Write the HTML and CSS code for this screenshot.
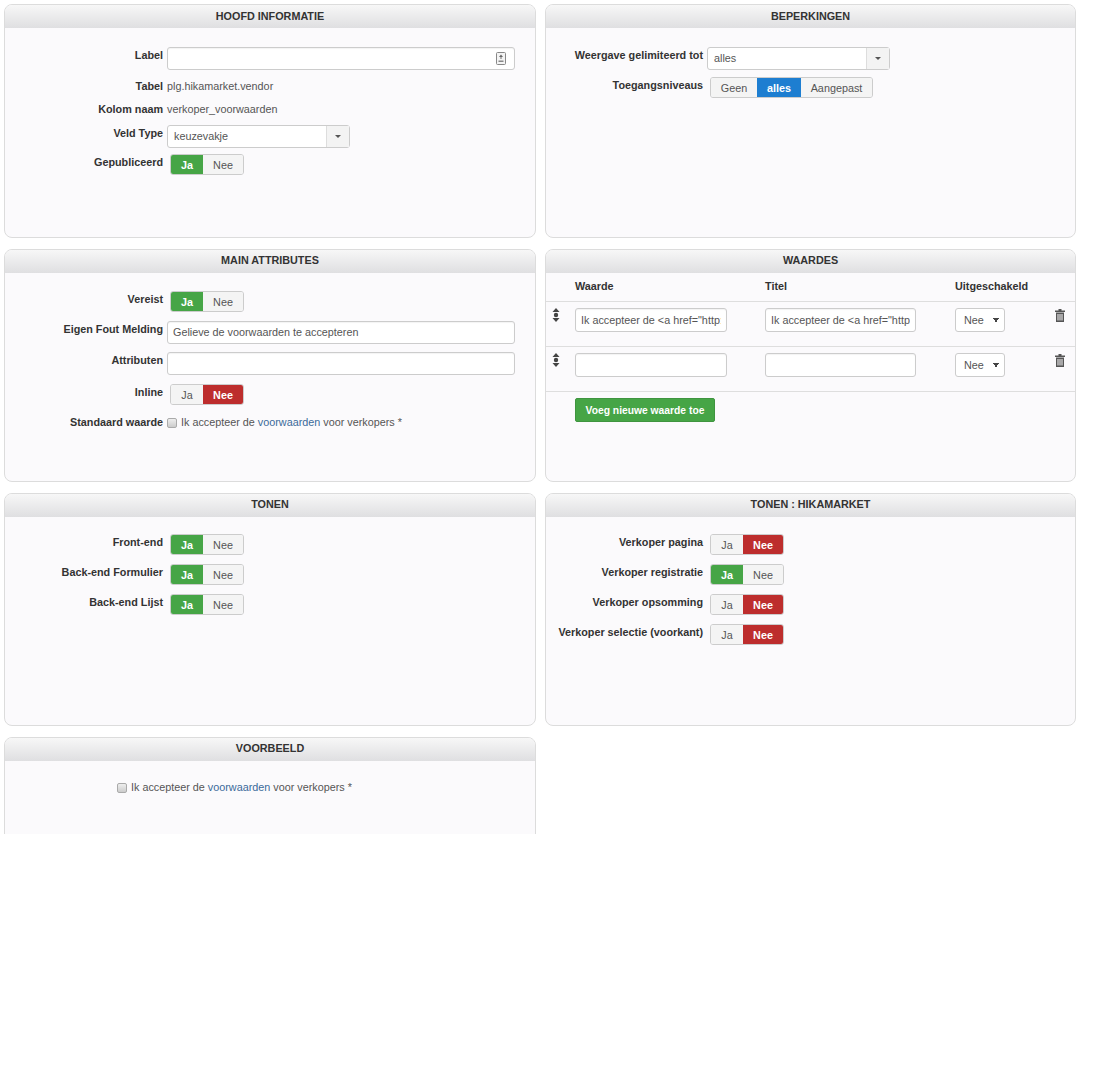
FILE: index.html
```html
<!DOCTYPE html>
<html lang="en">

<head>
    <meta charset="UTF-8">
    <title>Veld bewerken</title>
    <link rel="stylesheet" href="styles.css">
</head>

<body>
    <div class="page">
        <div class="panel">
            <div class="panel-title title-top">HOOFD INFORMATIE</div>
            <div class="panel-body">
                <div class="row">
                    <label class="row-label">Label</label>
                    <div class="field-wrap">
                        <input type="text" class="field">
                        <svg class="field-icon" width="10" height="13" viewBox="0 0 10 13">
                            <rect x="0.5" y="0.5" width="9" height="12" rx="1" fill="#f4f4f4" stroke="#888" />
                            <path d="M5 2.5 L7 5 H3 Z" fill="#666" />
                            <path d="M4.4 5 H5.6 V7 H4.4 Z M2.5 8.5 H7.5 V10 H2.5 Z" fill="#888" />
                        </svg>
                    </div>
                </div>
                <div class="row">
                    <label class="row-label">Tabel</label>
                    <div class="row-text">plg.hikamarket.vendor</div>
                </div>
                <div class="row row-before-select">
                    <label class="row-label">Kolom naam</label>
                    <div class="row-text">verkoper_voorwaarden</div>
                </div>
                <div class="row row-short">
                    <label class="row-label">Veld Type</label>
                    <div class="chosen">
                        <span class="chosen-value">keuzevakje</span>
                        <span class="chosen-arrow"><b class="caret"></b></span>
                    </div>
                </div>
                <div class="row">
                    <label class="row-label">Gepubliceerd</label>
                    <div class="switch">
                        <span class="switch-btn on-yes">Ja</span>
                        <span class="switch-btn">Nee</span>
                    </div>
                </div>
            </div>
        </div>

        <div class="panel panel-right">
            <div class="panel-title title-top">BEPERKINGEN</div>
            <div class="panel-body">
                <div class="row row-short">
                    <label class="row-label">Weergave gelimiteerd tot</label>
                    <div class="chosen">
                        <span class="chosen-value">alles</span>
                        <span class="chosen-arrow"><b class="caret"></b></span>
                    </div>
                </div>
                <div class="row">
                    <label class="row-label">Toegangsniveaus</label>
                    <div class="switch">
                        <span class="switch-btn btn-geen">Geen</span>
                        <span class="switch-btn on-blue">alles</span>
                        <span class="switch-btn btn-aangepast">Aangepast</span>
                    </div>
                </div>
            </div>
        </div>

        <div class="panel">
            <div class="panel-title">MAIN ATTRIBUTES</div>
            <div class="panel-body body-attr">
                <div class="row">
                    <label class="row-label">Vereist</label>
                    <div class="switch">
                        <span class="switch-btn on-yes">Ja</span>
                        <span class="switch-btn">Nee</span>
                    </div>
                </div>
                <div class="row">
                    <label class="row-label">Eigen Fout Melding</label>
                    <input type="text" class="field" value="Gelieve de voorwaarden te accepteren">
                </div>
                <div class="row row-before-select">
                    <label class="row-label">Attributen</label>
                    <input type="text" class="field">
                </div>
                <div class="row">
                    <label class="row-label">Inline</label>
                    <div class="switch">
                        <span class="switch-btn">Ja</span>
                        <span class="switch-btn on-no">Nee</span>
                    </div>
                </div>
                <div class="row">
                    <label class="row-label">Standaard waarde</label>
                    <div class="check-line">
                        <input type="checkbox" class="check">
                        <span>Ik accepteer de <a href="#">voorwaarden</a> voor verkopers *</span>
                    </div>
                </div>
            </div>
        </div>

        <div class="panel panel-right">
            <div class="panel-title">WAARDES</div>
            <div class="values-row values-head">
                <span></span>
                <span>Waarde</span>
                <span>Titel</span>
                <span>Uitgeschakeld</span>
                <span></span>
            </div>
            <div class="values-row">
                <svg class="drag-icon" width="8" height="14" viewBox="0 0 8 14">
                    <path d="M4 0 L7.5 4 H0.5 Z M4 14 L0.5 10 H7.5 Z" fill="#444" />
                    <circle cx="4" cy="7" r="2.2" fill="#444" />
                </svg>
                <input type="text" class="field" value='Ik accepteer de &lt;a href="http://example'>
                <input type="text" class="field" value='Ik accepteer de &lt;a href="http://example'>
                <select class="small-select">
                    <option>Nee</option>
                </select>
                <svg class="trash-icon" width="10" height="13" viewBox="0 0 10 13">
                    <path d="M3.5 0 H6.5 V1.5 H10 V3 H0 V1.5 H3.5 Z" fill="#555" />
                    <path d="M1 3.5 H9 V13 H1 Z M2.5 5 V11.5 H3.5 V5 Z M4.5 5 V11.5 H5.5 V5 Z M6.5 5 V11.5 H7.5 V5 Z" fill="#555" fill-rule="evenodd" />
                </svg>
            </div>
            <div class="values-row">
                <svg class="drag-icon" width="8" height="14" viewBox="0 0 8 14">
                    <path d="M4 0 L7.5 4 H0.5 Z M4 14 L0.5 10 H7.5 Z" fill="#444" />
                    <circle cx="4" cy="7" r="2.2" fill="#444" />
                </svg>
                <input type="text" class="field">
                <input type="text" class="field">
                <select class="small-select">
                    <option>Nee</option>
                </select>
                <svg class="trash-icon" width="10" height="13" viewBox="0 0 10 13">
                    <path d="M3.5 0 H6.5 V1.5 H10 V3 H0 V1.5 H3.5 Z" fill="#555" />
                    <path d="M1 3.5 H9 V13 H1 Z M2.5 5 V11.5 H3.5 V5 Z M4.5 5 V11.5 H5.5 V5 Z M6.5 5 V11.5 H7.5 V5 Z" fill="#555" fill-rule="evenodd" />
                </svg>
            </div>
            <button type="button" class="add-btn">Voeg nieuwe waarde toe</button>
        </div>

        <div class="panel">
            <div class="panel-title">TONEN</div>
            <div class="panel-body body-list">
                <div class="row">
                    <label class="row-label">Front-end</label>
                    <div class="switch">
                        <span class="switch-btn on-yes">Ja</span>
                        <span class="switch-btn">Nee</span>
                    </div>
                </div>
                <div class="row">
                    <label class="row-label">Back-end Formulier</label>
                    <div class="switch">
                        <span class="switch-btn on-yes">Ja</span>
                        <span class="switch-btn">Nee</span>
                    </div>
                </div>
                <div class="row">
                    <label class="row-label">Back-end Lijst</label>
                    <div class="switch">
                        <span class="switch-btn on-yes">Ja</span>
                        <span class="switch-btn">Nee</span>
                    </div>
                </div>
            </div>
        </div>

        <div class="panel panel-right">
            <div class="panel-title">TONEN : HIKAMARKET</div>
            <div class="panel-body body-list">
                <div class="row">
                    <label class="row-label">Verkoper pagina</label>
                    <div class="switch">
                        <span class="switch-btn">Ja</span>
                        <span class="switch-btn on-no">Nee</span>
                    </div>
                </div>
                <div class="row">
                    <label class="row-label">Verkoper registratie</label>
                    <div class="switch">
                        <span class="switch-btn on-yes">Ja</span>
                        <span class="switch-btn">Nee</span>
                    </div>
                </div>
                <div class="row">
                    <label class="row-label">Verkoper opsomming</label>
                    <div class="switch">
                        <span class="switch-btn">Ja</span>
                        <span class="switch-btn on-no">Nee</span>
                    </div>
                </div>
                <div class="row">
                    <label class="row-label">Verkoper selectie (voorkant)</label>
                    <div class="switch">
                        <span class="switch-btn">Ja</span>
                        <span class="switch-btn on-no">Nee</span>
                    </div>
                </div>
            </div>
        </div>

        <div class="panel">
            <div class="panel-title">VOORBEELD</div>
            <div class="preview">
                <input type="checkbox" class="check">
                <span>Ik accepteer de <a href="#">voorwaarden</a> voor verkopers *</span>
            </div>
        </div>
    </div>
</body>

</html>
```

FILE: styles.css
```css
body {
    margin: 0;
    background-color: #fff;
    font-family: "Liberation Sans", Arial, sans-serif;
    font-size: 10.8px;
    color: #555;
}

.page {
    display: grid;
    grid-template-columns: 532px 531px;
    grid-template-rows: 234px 233px 233px 233px;
    column-gap: 9px;
    row-gap: 11px;
    width: 1072px;
    height: 830px;
    margin: 4px 0 0 4px;
    overflow: hidden;
}

.panel {
    background-color: #fbfafc;
    border: 1px solid #dcdcdc;
    border-radius: 8px;
    box-sizing: border-box;
}

.panel-title {
    height: 23px;
    line-height: 21px;
    text-align: center;
    font-weight: bold;
    color: #333;
    border-radius: 7px 7px 0 0;
    background: linear-gradient(to bottom, #f7f7f7, #dfdfe1);
}

.title-top {
    line-height: 23px;
}

.panel-body {
    padding-top: 19px;
}

.body-attr {
    padding-top: 18px;
}

.body-list {
    padding-top: 17px;
}

.row {
    display: flex;
    gap: 4px;
    margin-bottom: 8px;
}

.row-short {
    margin-bottom: 6px;
}

.panel-right .row-short {
    margin-bottom: 7px;
}

.row-before-select {
    margin-bottom: 9px;
}

.row-label {
    flex: none;
    width: 158px;
    padding-top: 1px;
    line-height: 14px;
    text-align: right;
    font-weight: bold;
    color: #333;
}

.panel-right .row-label {
    width: 157px;
}

.row-text {
    padding-top: 1px;
    line-height: 14px;
}

.field {
    box-sizing: border-box;
    width: 348px;
    height: 23px;
    padding: 0 5px 1px;
    border: 1px solid #ccc;
    border-radius: 3px;
    background-color: #fff;
    box-shadow: inset 0 1px 1px rgba(0, 0, 0, 0.05);
    font-family: inherit;
    font-size: 10.8px;
    color: #555;
}

.field-wrap {
    position: relative;
}

.field-icon {
    position: absolute;
    top: 5px;
    right: 9px;
}

.chosen {
    display: flex;
    box-sizing: border-box;
    width: 183px;
    height: 23px;
    border: 1px solid #ccc;
    border-radius: 3px;
    background-color: #fff;
    line-height: 21px;
}

.chosen-value {
    flex: 1;
    padding-left: 6px;
}

.chosen-arrow {
    display: flex;
    align-items: center;
    justify-content: center;
    width: 22px;
    border-left: 1px solid #ddd;
    background-color: #f3f3f3;
}

.caret {
    border-top: 3px solid #555;
    border-left: 3px solid transparent;
    border-right: 3px solid transparent;
}

.switch {
    display: flex;
    height: 21px;
    margin: 0 0 1px 3px;
    border: 1px solid #ccc;
    border-radius: 3px;
    box-sizing: border-box;
    overflow: hidden;
}

.switch-btn {
    box-sizing: border-box;
    width: 32px;
    line-height: 20px;
    text-align: center;
    background-color: #f4f4f4;
}

.switch-btn + .switch-btn {
    width: 40px;
}

.switch .btn-geen {
    width: 46px;
}

.switch .on-blue {
    width: 44px;
}

.switch .btn-aangepast {
    width: 71px;
}

.on-yes {
    background-color: #46a546;
    color: #fff;
    font-weight: bold;
}

.on-no {
    background-color: #bd2d2d;
    color: #fff;
    font-weight: bold;
}

.on-blue {
    background-color: #1d7ed1;
    color: #fff;
    font-weight: bold;
}

.check-line {
    display: flex;
    align-items: center;
    gap: 4px;
    padding-top: 1px;
    line-height: 14px;
}

.check {
    appearance: none;
    box-sizing: border-box;
    flex: none;
    width: 10px;
    height: 10px;
    margin: 2px 0 0;
    border: 1px solid #aaa;
    border-radius: 2px;
    background: linear-gradient(to bottom, #eee, #ccc);
}

a {
    color: #3b6a9a;
    text-decoration: none;
}

.values-row {
    display: grid;
    grid-template-columns: 29px 190px 190px 100px 1fr;
    height: 45px;
    box-sizing: border-box;
    padding-top: 6px;
    border-bottom: 1px solid #dedede;
}

.values-row .field {
    width: 152px;
    height: 24px;
    padding: 0 5px;
}

.values-row .field + .field {
    width: 151px;
}

.values-head {
    height: 29px;
    padding-top: 7px;
    font-weight: bold;
    color: #333;
}

.drag-icon {
    margin: 0 0 0 6px;
}

.trash-icon {
    margin-top: 1px;
}

.small-select {
    appearance: none;
    box-sizing: border-box;
    width: 50px;
    height: 24px;
    padding-left: 8px;
    border: 1px solid #ccc;
    border-radius: 3px;
    background: #fff conic-gradient(from -30deg at 50% 100%, #444 60deg, transparent 60deg) 37px 9px / 6px 5px no-repeat;
    font-family: inherit;
    font-size: 10.8px;
    color: #555;
}

.add-btn {
    display: block;
    box-sizing: border-box;
    width: 140px;
    height: 24px;
    margin: 6px 0 0 29px;
    padding: 0;
    border: 1px solid #3f943f;
    border-radius: 2px;
    background-color: #46a546;
    color: #fff;
    font-family: inherit;
    font-size: 10.3px;
    font-weight: bold;
}

.preview {
    display: flex;
    align-items: center;
    gap: 4px;
    padding: 19px 0 0 112px;
    line-height: 14px;
}
```
